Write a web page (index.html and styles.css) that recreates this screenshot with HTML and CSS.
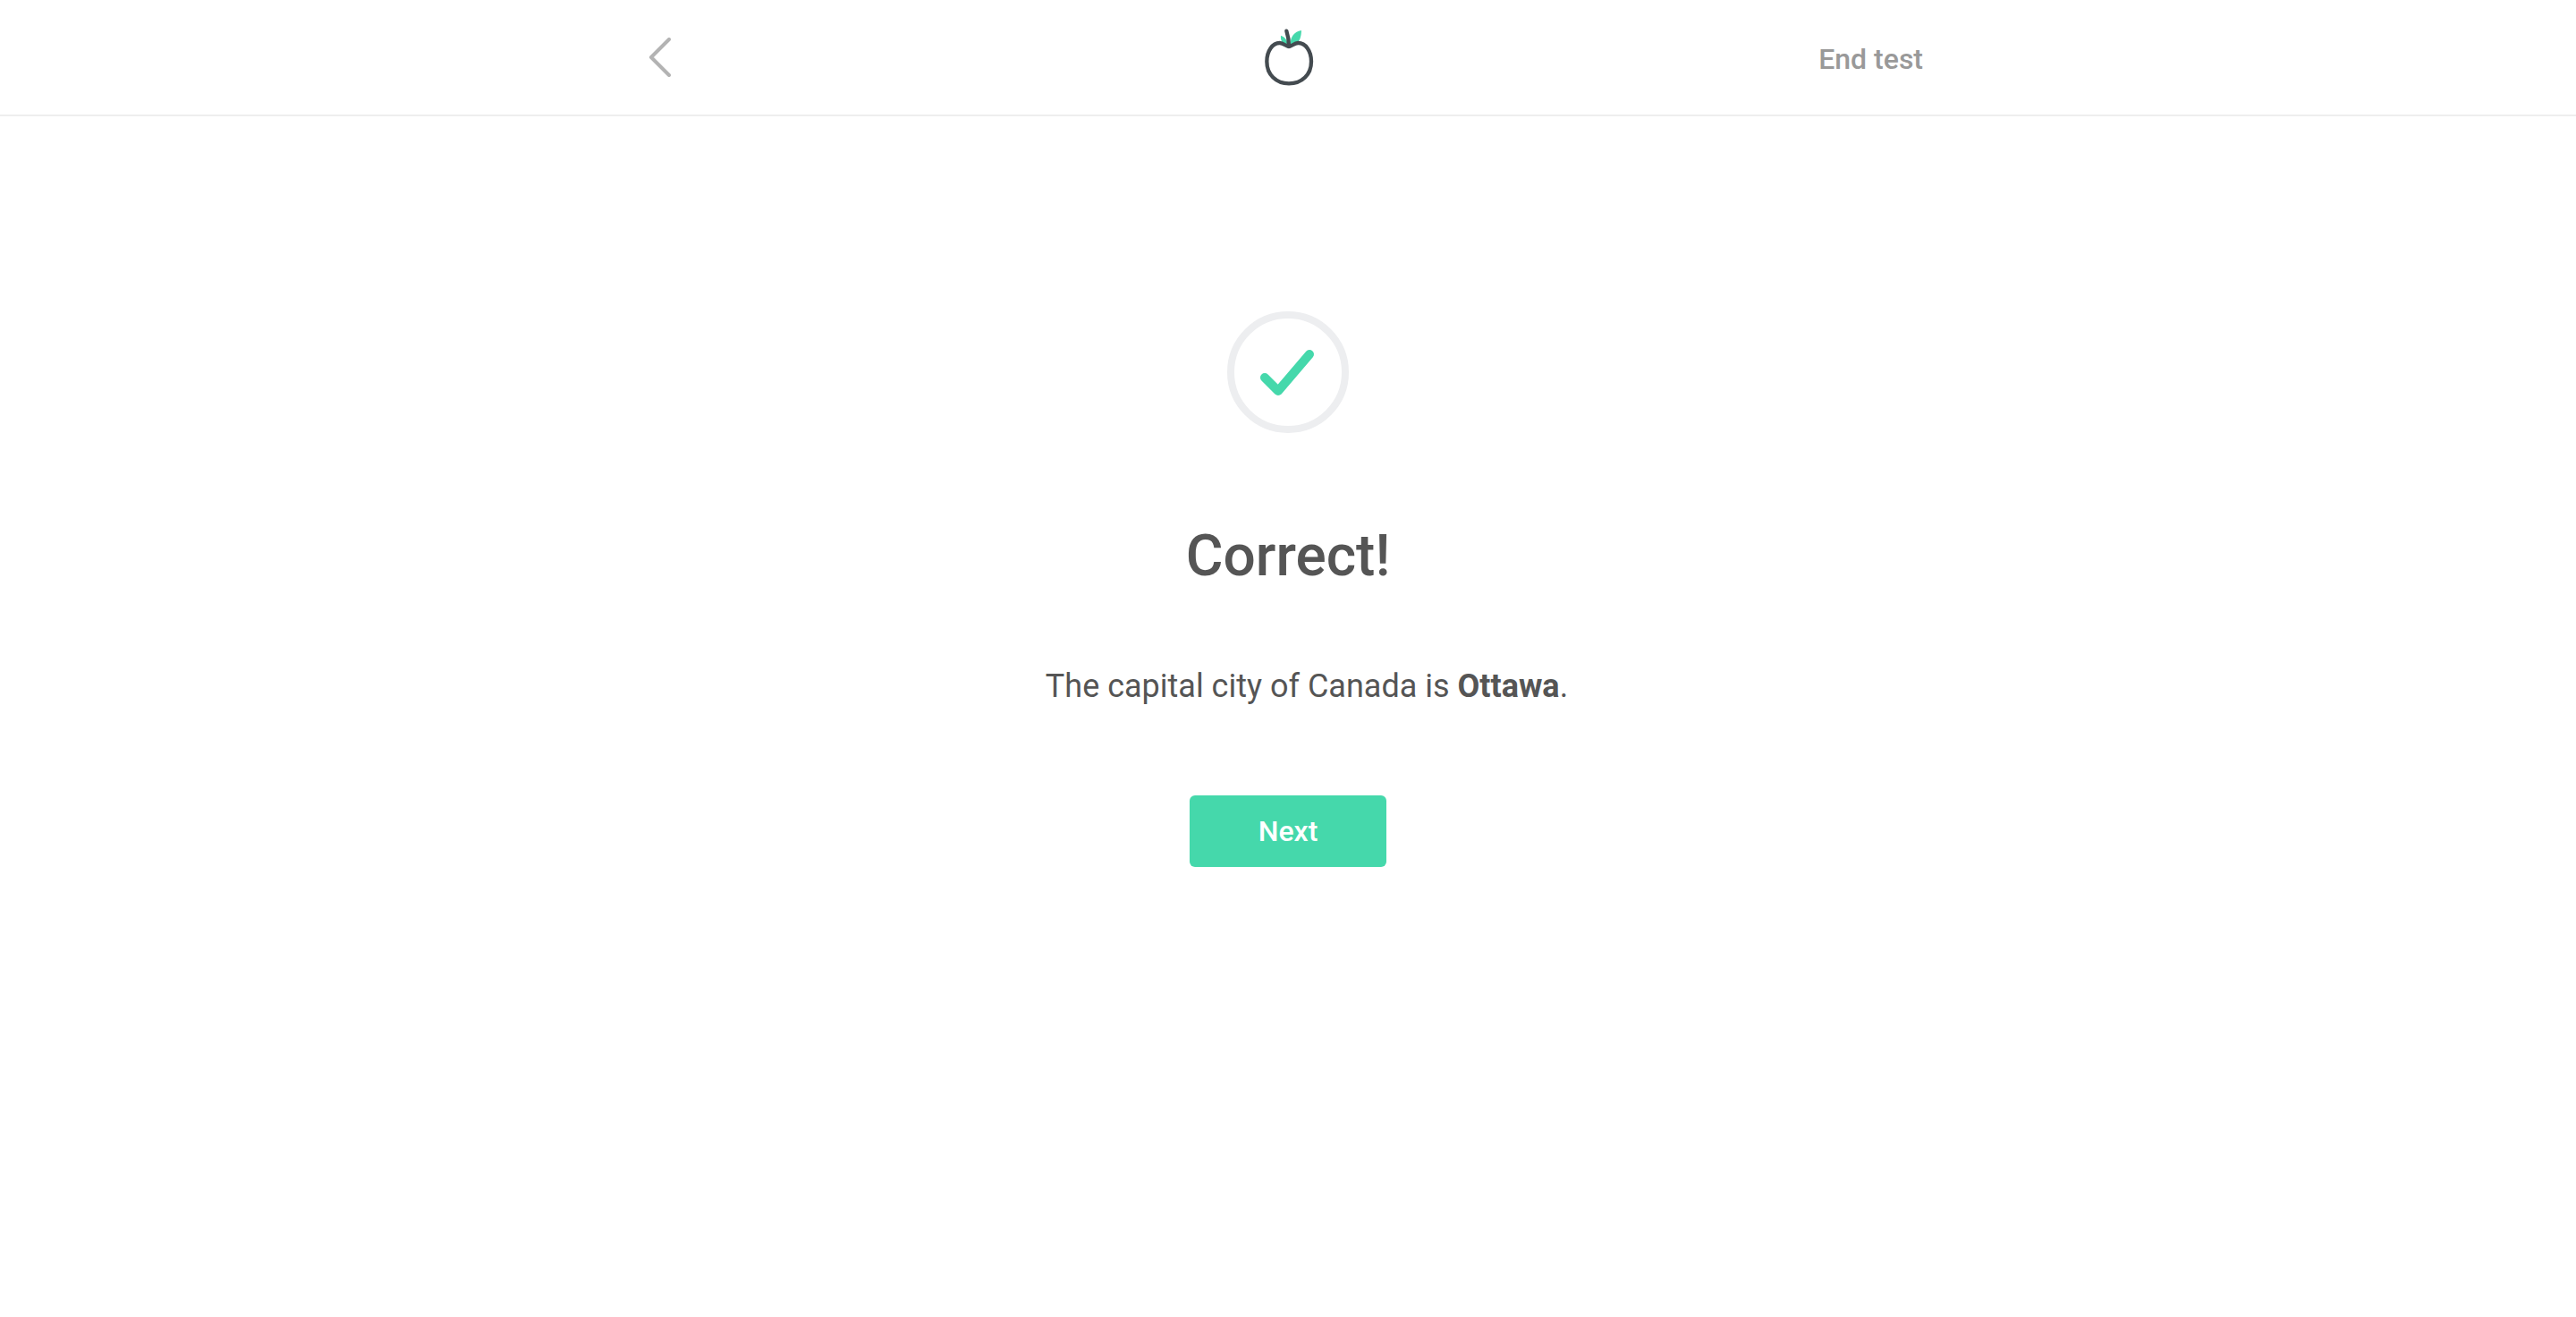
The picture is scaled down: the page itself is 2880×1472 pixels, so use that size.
FILE: index.html
```html
<!DOCTYPE html>
<html lang="en">
<head>
  <meta charset="utf-8">
  <meta name="viewport" content="width=device-width, initial-scale=1">
  <title>Correct!</title>
  <link rel="stylesheet" href="styles.css">
</head>
<body>
  <header class="topbar">
    <nav class="topbar-inner">
      <button class="back" type="button" aria-label="Back">
        <svg width="24" height="44" viewBox="0 0 24 44" aria-hidden="true">
          <path d="M22 2 2 22 22 42" fill="none" stroke="#b3b3b3" stroke-width="4" stroke-linecap="round" stroke-linejoin="round"/>
        </svg>
      </button>
      <a class="logo" href="#" aria-label="Home">
        <svg width="60" height="68" viewBox="60 30 180 204" aria-hidden="true">
          <path d="M146 89C131 87 124 76 126 59C139 64 148 74 148 89Z" fill="#45d8ab"/>
          <path d="M158 91C157 66 168 47 195 42C194 73 184 91 158 91Z" fill="#45d8ab"/>
          <path d="M153 96C143 96 136 84 122 84C98 84 79 111 79 146C79 190 110 220 153 220C197 220 228 190 228 146C228 111 209 84 184 84C170 84 163 96 153 96Z" fill="none" stroke="#444b50" stroke-width="13" stroke-linejoin="round"/>
          <path d="M145 44C150 59 153 77 153 95" fill="none" stroke="#444b50" stroke-width="13" stroke-linecap="round"/>
        </svg>
      </a>
      <a class="end" href="#">End test</a>
    </nav>
  </header>
  <main class="result">
    <svg class="badge" width="136" height="136" viewBox="0 0 136 136" aria-hidden="true">
      <circle cx="68" cy="68" r="64" fill="none" stroke="#edeef0" stroke-width="8"/>
      <path d="M42 74 57 89 92 48" fill="none" stroke="#45d8ab" stroke-width="10" stroke-linecap="round" stroke-linejoin="round"/>
    </svg>
    <h1 class="title">Correct!</h1>
    <p class="answer">The capital city of Canada is <strong>Ottawa</strong>.</p>
    <button class="next" type="button">Next</button>
  </main>
</body>
</html>
```
FILE: styles.css
```css
* {
  box-sizing: border-box;
}

body {
  margin: 0;
  background: #fff;
  color: #555;
  font-family: Roboto, "Liberation Sans", sans-serif;
}

.topbar {
  border-bottom: 2px solid #eee;
}

.topbar-inner {
  display: grid;
  grid-template-columns: 1fr auto 1fr;
  align-items: center;
  width: 50%;
  min-width: 480px;
  height: 128px;
  margin: 0 auto;
  padding: 0 6px;
}

.back {
  justify-self: start;
  padding: 0;
  border: 0;
  background: none;
  cursor: pointer;
}

.back svg,
.logo svg {
  display: block;
}

.end {
  justify-self: end;
  padding: 4px 4px 0 0;
  color: #999;
  font-size: 32px;
  font-weight: 500;
  line-height: 40px;
  text-decoration: none;
}

.result {
  display: flex;
  flex-direction: column;
  align-items: center;
  padding: 218px 24px 48px;
}

.title {
  margin: 98px 0 0;
  font-size: 64px;
  font-weight: 500;
  line-height: 80px;
}

.answer {
  margin: 81px 0 0;
  padding-left: 42px;
  font-size: 36px;
  line-height: 48px;
}

.next {
  width: 220px;
  height: 80px;
  margin-top: 98px;
  border: 0;
  border-radius: 6px;
  background: #45d8ab;
  color: #fff;
  font: 500 32px Roboto, "Liberation Sans", sans-serif;
  cursor: pointer;
}
```
